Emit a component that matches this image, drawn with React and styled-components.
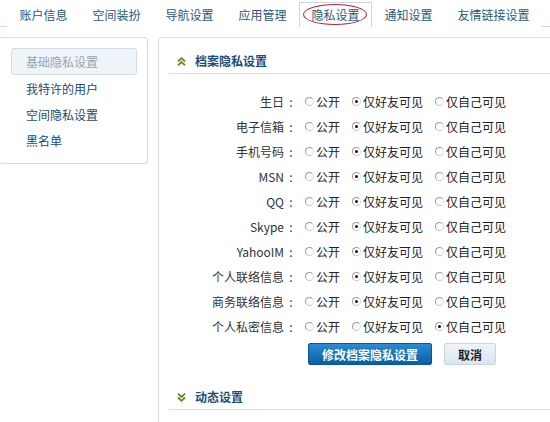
import React, { useState } from "react";
import styled, { createGlobalStyle } from "styled-components";

const GlobalStyle = createGlobalStyle`
  body {
    margin: 0;
    background: #ffffff;
    font-family: "Noto Sans CJK SC", "Noto Sans", sans-serif;
    font-size: 12px;
    color: #333;
    overflow: hidden;
  }
`;

const Page = styled.div`
  width: 550px;
  height: 422px;
  overflow: hidden;
`;

const TabBar = styled.div`
  display: flex;
  height: 26px;
  padding-left: 7px;
  border-bottom: 1px solid #c9d8e1;
`;

const Tab = styled.div`
  position: relative;
  padding: 0 11.5px;
  box-sizing: border-box;
  margin-top: 2px;
  height: 25px;
  line-height: 23px;
  white-space: nowrap;
  color: #2a5878;
  border: 1px solid ${(p) => (p.$active ? "#c9d8e1" : "transparent")};
  border-bottom: none;
  background: #fff;
  cursor: pointer;
`;

const Circle = styled.span`
  position: absolute;
  left: 3px;
  top: 1px;
  width: 62px;
  height: 19px;
  border: 1px solid #b3262f;
  border-radius: 50%;
  pointer-events: none;
`;

const Body = styled.div`
  display: flex;
  align-items: flex-start;
  gap: 10px;
  margin-top: 10px;
`;

const Sidebar = styled.div`
  width: 149px;
  box-sizing: border-box;
  margin-left: -1px;
  padding: 10px 10px 10px 11px;
  border: 1px solid #d3dfe6;
  border-radius: 3px;
`;

const SideItem = styled.div`
  height: ${(p) => (p.$active ? "27px" : "26px")};
  line-height: ${(p) => (p.$active ? "25px" : "26px")};
  box-sizing: border-box;
  padding-left: 14px;
  color: ${(p) => (p.$active ? "#97a6b0" : "#1b4a6e")};
  background: ${(p) => (p.$active ? "#eef4f8" : "transparent")};
  border: 1px solid ${(p) => (p.$active ? "#d2dee6" : "transparent")};
  border-radius: 3px;
  cursor: pointer;
`;

const Main = styled.div`
  flex: 1;
  margin-right: -20px;
  height: 400px;
  padding: 0 0 0 10px;
  border: 1px solid #d3dfe6;
  border-radius: 3px 0 0 0;
`;

const SectionHead = styled.div`
  display: flex;
  align-items: center;
  gap: 9px;
  padding: 14px 0 3px 8px;
  margin-top: ${(p) => p.$top || 0}px;
  line-height: 18px;
  border-bottom: 1px solid #dcdcdc;
  color: #1d4d76;
  font-weight: bold;
`;

const Form = styled.div`
  display: grid;
  grid-template-columns: 129px 1fr;
  grid-auto-rows: 25px;
  column-gap: 7px;
  margin-top: 15px;
  align-items: center;
`;

const Label = styled.div`
  text-align: right;
  color: #333;
  white-space: nowrap;
`;

const Colon = styled.span`
  display: inline-block;
  width: 14px;
  text-align: center;
`;

const Options = styled.div`
  display: flex;
  align-items: center;
`;

const Option = styled.label`
  display: flex;
  align-items: center;
  gap: 2px;
  margin-right: 12px;
  color: #222;
  cursor: pointer;
`;

const Radio = styled.span`
  position: relative;
  width: 9px;
  height: 9px;
  box-sizing: border-box;
  border-radius: 50%;
  border: 1px solid #9b9b9b;
  border-right-color: #dcdcdc;
  border-bottom-color: #c8c8c8;
  background: #fff;
  &::after {
    content: "";
    display: ${(p) => (p.$on ? "block" : "none")};
    position: absolute;
    left: 2px;
    top: 2px;
    width: 3px;
    height: 3px;
    border-radius: 50%;
    background: #111;
  }
`;

const Buttons = styled.div`
  display: flex;
  gap: 12px;
  margin: 4px 0 0 139px;
`;

const Button = styled.button`
  height: 22px;
  padding: 0 13px;
  font-family: inherit;
  font-size: 12px;
  font-weight: bold;
  border-radius: 2px;
  cursor: pointer;
  color: ${(p) => (p.$primary ? "#fff" : "#222")};
  border: 1px solid ${(p) => (p.$primary ? "#0a5694" : "#c6d6e3")};
  background: ${(p) =>
    p.$primary
      ? "linear-gradient(#2b8bd1, #0b5ea3)"
      : "linear-gradient(#eef4f9, #d9e6f0)"};
`;

const Chevrons = ({ down }) => (
  <svg width="9" height="9" viewBox="0 0 9 9">
    <g
      fill="none"
      stroke="#5f8d1f"
      strokeWidth="1.8"
      transform={down ? "rotate(180 4.5 4.5)" : undefined}
    >
      <polyline points="1,4.5 4.5,1.2 8,4.5" />
      <polyline points="1,8.3 4.5,5 8,8.3" />
    </g>
  </svg>
);

const tabs = ["账户信息", "空间装扮", "导航设置", "应用管理", "隐私设置", "通知设置", "友情链接设置"];
const sideItems = ["基础隐私设置", "我特许的用户", "空间隐私设置", "黑名单"];
const fields = [
  ["生日", 1],
  ["电子信箱", 1],
  ["手机号码", 1],
  ["MSN", 1],
  ["QQ", 1],
  ["Skype", 1],
  ["YahooIM", 1],
  ["个人联络信息", 1],
  ["商务联络信息", 1],
  ["个人私密信息", 2],
];
const choices = ["公开", "仅好友可见", "仅自己可见"];

export default function App() {
  const [values, setValues] = useState(fields.map((f) => f[1]));
  return (
    <Page>
      <GlobalStyle />
      <TabBar>
        {tabs.map((t, i) => (
          <Tab key={t} $active={i === 4}>
            {t}
            {i === 4 && <Circle />}
          </Tab>
        ))}
      </TabBar>
      <Body>
        <Sidebar>
          {sideItems.map((s, i) => (
            <SideItem key={s} $active={i === 0}>
              {s}
            </SideItem>
          ))}
        </Sidebar>
        <Main>
          <SectionHead>
            <Chevrons />
            档案隐私设置
          </SectionHead>
          <Form>
            {fields.map(([name], row) => (
              <React.Fragment key={name}>
                <Label>
                  {name}
                  <Colon>:</Colon>
                </Label>
                <Options>
                  {choices.map((c, k) => (
                    <Option
                      key={c}
                      onClick={() =>
                        setValues((v) => v.map((x, j) => (j === row ? k : x)))
                      }
                    >
                      <Radio $on={values[row] === k} />
                      {c}
                    </Option>
                  ))}
                </Options>
              </React.Fragment>
            ))}
          </Form>
          <Buttons>
            <Button $primary>修改档案隐私设置</Button>
            <Button>取消</Button>
          </Buttons>
          <SectionHead $top={9}>
            <Chevrons down />
            动态设置
          </SectionHead>
        </Main>
      </Body>
    </Page>
  );
}
